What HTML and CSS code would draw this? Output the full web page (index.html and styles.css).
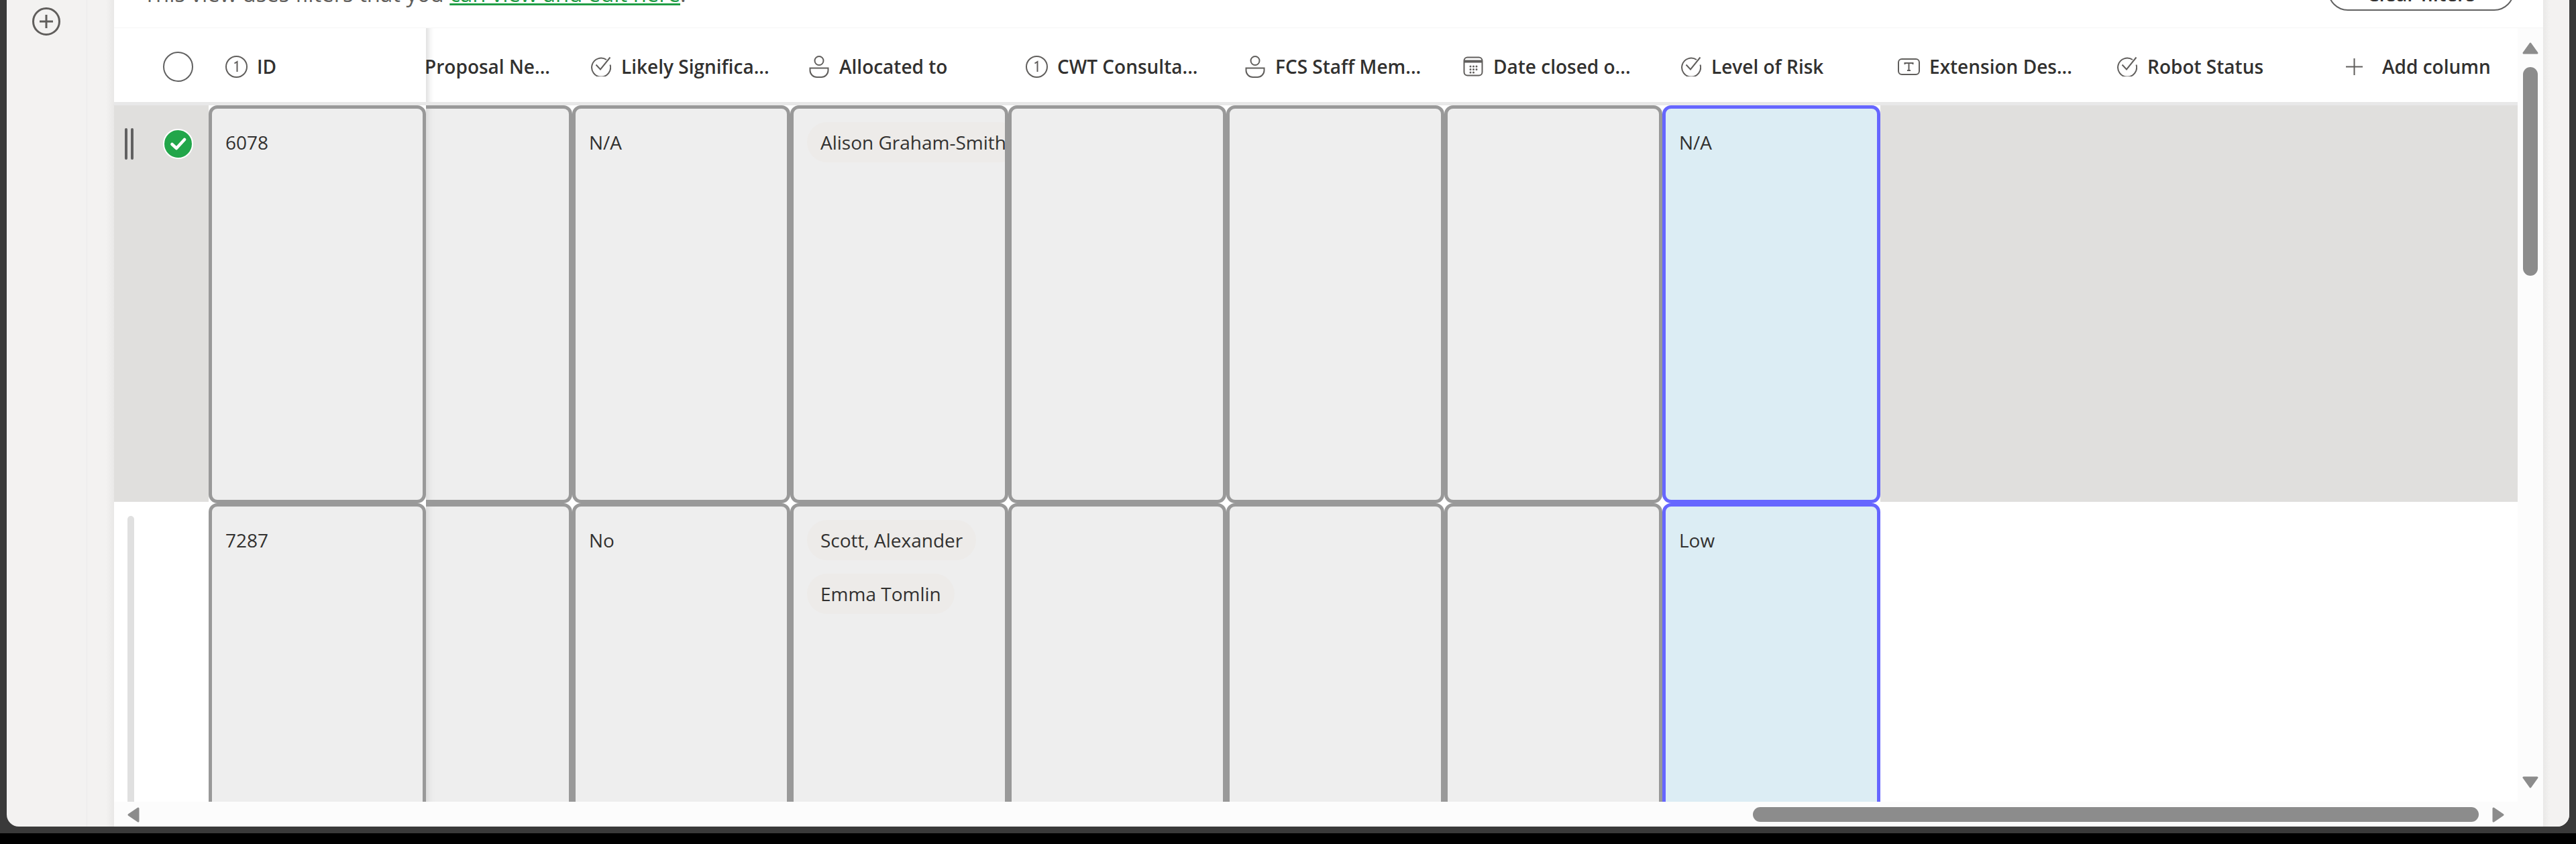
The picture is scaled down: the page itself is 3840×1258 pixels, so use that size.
FILE: index.html
```html
<!DOCTYPE html>
<html lang="en">
<head>
<meta charset="utf-8">
<title>List view</title>
<link rel="stylesheet" href="styles.css">
</head>
<body>
<div class="app">
  <div class="shell">
    <aside class="rail">
      <svg class="rail-add" viewBox="0 0 42 42"><circle cx="21" cy="21" r="19.5"/><path d="M21 11v20M11 21h20"/></svg>
    </aside>
    <div class="gutter-left"></div>
    <main class="main">
      <div class="toolbar">
        <p class="notice">This view uses filters that you <a class="notice-link">can view and edit here</a>.</p>
        <button class="clear">Clear filters</button>
      </div>
      <div class="body">
        <section class="grid">
          <div class="head">
            <div class="head-fixed">
              <div class="head-select"><span class="radio"></span></div>
              <div class="hc"><svg class="ic ic-num" viewBox="0 0 33 33"><circle cx="16.5" cy="16.5" r="15.5"/><path d="M13.5 11.5l4-2.5v15"/></svg><span class="hl">ID</span></div>
            </div>
            <div class="head-cut"><span class="hl">Proposal Ne...</span></div>
            <div class="hc col"><svg class="ic ic-chk" viewBox="0 0 30 30"><path d="M23 5A14 14 0 1 0 28.500 12.500"/><path d="M7.500 12.500L14 19.500 28.500 1.500"/></svg><span class="hl">Likely Significa...</span></div>
            <div class="hc col"><svg class="ic ic-per" viewBox="0 0 30 33"><circle cx="15" cy="7.500" r="6.500"/><path d="M1.500 18.500h27v3.500a10 10 0 0 1-10 10h-7a10 10 0 0 1-10-10z"/></svg><span class="hl">Allocated to</span></div>
            <div class="hc col tight"><svg class="ic ic-num" viewBox="0 0 33 33"><circle cx="16.5" cy="16.5" r="15.5"/><path d="M13.5 11.5l4-2.500v15"/></svg><span class="hl">CWT Consulta...</span></div>
            <div class="hc col"><svg class="ic ic-per" viewBox="0 0 30 33"><circle cx="15" cy="7.500" r="6.500"/><path d="M1.500 18.500h27v3.500a10 10 0 0 1-10 10h-7a10 10 0 0 1-10-10z"/></svg><span class="hl">FCS Staff Mem...</span></div>
            <div class="hc col"><svg class="ic ic-cal" viewBox="0 0 30 30"><rect x="1.500" y="1.500" width="27" height="27" rx="5"/><path class="bar" d="M2 7.500h26"/><path class="dots" d="M11 15h.01M15.500 15h.01M20 15h.01M11 19.500h.01M15.500 19.500h.01M20 19.500h.01M11 24h.01M15.500 24h.01"/></svg><span class="hl">Date closed o...</span></div>
            <div class="hc col"><svg class="ic ic-chk" viewBox="0 0 30 30"><path d="M23 5A14 14 0 1 0 28.500 12.500"/><path d="M7.500 12.500L14 19.500 28.500 1.500"/></svg><span class="hl">Level of Risk</span></div>
            <div class="hc col tight"><svg class="ic ic-txt" viewBox="0 0 33 25"><rect x="1" y="1" width="31" height="23" rx="5"/><path d="M10.500 9V7h12v2M16.500 7v11M14 18h5"/></svg><span class="hl">Extension Des...</span></div>
            <div class="hc col"><svg class="ic ic-chk" viewBox="0 0 30 30"><path d="M23 5A14 14 0 1 0 28.500 12.500"/><path d="M7.500 12.500L14 19.500 28.500 1.500"/></svg><span class="hl">Robot Status</span></div>
            <div class="hc add"><svg class="ic-plus" viewBox="0 0 25 25"><path d="M12.500 0v25M0 12.500h25"/></svg><span class="hl">Add column</span></div>
          </div>
          <div class="rows">
            <div class="row row-on">
              <div class="lead lead-on">
                <span class="grip"><i></i><i></i></span>
                <svg class="tick" viewBox="0 0 45 45"><circle cx="22.500" cy="22.500" r="21.500"/><path d="M13.500 23l6.500 6 12-13"/></svg>
              </div>
              <div class="cell id"><div class="box">6078</div></div>
              <div class="cell cut"><div class="box"></div></div>
              <div class="cell"><div class="box">N/A</div></div>
              <div class="cell"><div class="box chips"><span class="chip">Alison Graham-Smith</span></div></div>
              <div class="cell"><div class="box"></div></div>
              <div class="cell"><div class="box"></div></div>
              <div class="cell"><div class="box"></div></div>
              <div class="cell hot"><div class="box">N/A</div></div>
              <div class="fill"></div>
            </div>
            <div class="row">
              <div class="lead"><span class="grip-off"></span></div>
              <div class="cell id"><div class="box">7287</div></div>
              <div class="cell cut"><div class="box"></div></div>
              <div class="cell"><div class="box">No</div></div>
              <div class="cell"><div class="box chips"><span class="chip">Scott, Alexander</span><span class="chip">Emma Tomlin</span></div></div>
              <div class="cell"><div class="box"></div></div>
              <div class="cell"><div class="box"></div></div>
              <div class="cell"><div class="box"></div></div>
              <div class="cell hot"><div class="box">Low</div></div>
              <div class="fill"></div>
            </div>
          </div>
        </section>
        <div class="vbar">
          <svg class="arrow-v" viewBox="0 0 24 18"><path d="M12 2L2 16h20z"/></svg>
          <span class="vthumb"></span>
          <svg class="arrow-v down" viewBox="0 0 24 18"><path d="M2 2h20L12 16z"/></svg>
        </div>
      </div>
      <div class="hbar">
        <svg class="arrow-h" viewBox="0 0 18 23"><path d="M16 2v19L2 11.500z"/></svg>
        <span class="hthumb"></span>
        <svg class="arrow-h" viewBox="0 0 18 23"><path d="M2 2v19l14-9.500z"/></svg>
      </div>
    </main>
    <div class="gutter-right"></div>
  </div>
</div>
</body>
</html>
```
FILE: styles.css
```css
* { box-sizing: border-box; }
html, body { margin: 0; height: 1258px; overflow: hidden; background: #000; }
body { font-family: "Open Sans", "Noto Sans", sans-serif; font-size: 28px; color: #323130; }

.app { height: 1242px; padding: 0 10px 10px; background: #3a3a3a; }
.shell { display: flex; height: 1232px; background: #f3f2f1; border-radius: 0 0 18px 18px; overflow: hidden; }

.rail { width: 120px; flex: none; border-right: 1px solid #ebeaea; padding: 11px 0 0 38px; }
.rail-add { display: block; width: 42px; height: 42px; fill: none; stroke: #605e5c; stroke-width: 3; }
.gutter-left { width: 40px; flex: none; background: linear-gradient(to right, #f3f2f1 70%, #e9e8e7); }
.gutter-right { flex: 1; background: linear-gradient(to right, #e9e8e7, #f3f2f1 25%); }

.main { width: 3621px; flex: none; display: flex; flex-direction: column; background: #fcfcfc; }

.toolbar { height: 42px; flex: none; display: flex; justify-content: space-between; align-items: flex-end; padding: 0 43px 26px 44px; overflow: hidden; background: #fff; }
.notice { margin: 0 0 5px; line-height: 40px; color: #605e5c; white-space: nowrap; font-size: 32.8px; }
.notice-link { color: #1f9d45; text-decoration: underline; text-decoration-thickness: 3px; text-underline-offset: 2px; }
.clear { flex: none; width: 278px; height: 60px; padding: 8px 0 0; border: 2px solid #616161; border-radius: 30px; background: #fff; font: 600 29px "Open Sans", sans-serif; color: #323130; }

.body { flex: 1; min-height: 0; display: flex; border-top: 1px solid #f6f6f6; margin-top: -1px; }
.grid { width: 3583px; flex: none; display: flex; flex-direction: column; background: #fff; overflow: hidden; }

.head { height: 115px; flex: none; display: flex; align-items: stretch; border-bottom: 5px solid #e8e8e8; }
.head > * { padding-top: 4px; }
.head-fixed { width: 465px; flex: none; display: flex; align-items: center; }
.head-select { width: 166px; flex: none; display: flex; justify-content: flex-end; padding-right: 48px; }
.radio { width: 45px; height: 45px; border-radius: 50%; border: 2px solid #616161; }
.head-cut { width: 218px; flex: none; display: flex; align-items: center; justify-content: flex-end; padding-right: 33px; overflow: hidden; white-space: nowrap; box-shadow: inset 12px 0 8px -8px #ddd; }
.hc { display: flex; align-items: center; gap: 15px; white-space: nowrap; }
.col { width: 325px; flex: none; padding-left: 28px; }
.col.tight { padding-left: 26px; }
.add { padding-left: 44px; gap: 29px; flex: 1; }
.hl { font-weight: 600; font-size: 28px; color: #323130; }

.ic { flex: none; fill: none; stroke: #605e5c; stroke-width: 2; }
.ic-num { width: 33px; height: 33px; margin-right: -1px; }
.ic-chk { width: 30px; height: 30px; }
.ic-per { width: 30px; height: 33px; }
.ic-cal { width: 30px; height: 30px; }
.ic-cal .bar { stroke-width: 4; }
.ic-cal .dots { stroke-width: 3; stroke-linecap: round; }
.ic-txt { width: 33px; height: 25px; margin-right: -1px; }
.ic-plus { width: 25px; height: 25px; fill: none; stroke: #605e5c; stroke-width: 2; flex: none; }

.rows { flex: 1; min-height: 0; overflow: hidden; }
.row { height: 593px; display: flex; background: #fff; }

.lead { width: 141px; flex: none; display: flex; align-items: flex-start; padding-left: 16px; }
.lead-on { background: #e0dfdd; margin-bottom: 2px; }
.fill { flex: 1; margin-bottom: 2px; }
.row-on .fill { background: #e0dfdd; }
.grip { display: flex; justify-content: space-between; width: 13px; height: 47px; margin-top: 34px; }
.grip i { display: block; width: 4px; border-radius: 2px; background: #616161; }
.tick { width: 45px; height: 45px; margin: 35px 0 0 44px; }
.tick circle { fill: #22a64a; stroke: #fff; stroke-width: 2; }
.tick path { fill: none; stroke: #fff; stroke-width: 4.500; stroke-linecap: round; stroke-linejoin: round; }
.grip-off { width: 10px; height: 500px; margin: 19px 0 0 4px; border-radius: 5px; background: #e0e0e0; }

.cell { width: 325px; flex: none; background: #fff; }
.cell.id { width: 324px; }
.cell.cut { width: 218px; }
.box { height: 100%; border: 5px solid #999; border-radius: 13px; background: #eee; padding: 20px; line-height: 60px; overflow: hidden; white-space: nowrap; }
.cut .box { border-left: 0; border-radius: 0 13px 13px 0; box-shadow: inset 14px 0 10px -10px #d9d9d9; }
.hot .box { border-color: #6666ff; background: #dcedf4; }
.chips { display: flex; flex-direction: column; align-items: flex-start; gap: 20px; }
.chip { flex: none; height: 60px; padding: 0 20px; border-radius: 30px; background: #edebe9; }

.vbar { flex: 1; display: flex; flex-direction: column; align-items: center; padding: 21px 0 20px; background: #fcfcfc; }
.arrow-v { width: 24px; height: 18px; flex: none; fill: #8c8c8c; stroke: #8c8c8c; stroke-width: 3; stroke-linejoin: round; }
.vthumb { width: 22px; height: 311px; margin-top: 19px; border-radius: 11px; background: #8c8c8c; flex: none; }
.down { margin-top: auto; }

.hbar { height: 37px; flex: none; display: flex; align-items: flex-start; padding: 8px 0 0 20px; background: #fcfcfc; }
.arrow-h { width: 18px; height: 23px; flex: none; fill: #8c8c8c; stroke: #8c8c8c; stroke-width: 3; stroke-linejoin: round; }
.hthumb { width: 1082px; height: 22px; margin: 0 20px 0 2405px; border-radius: 11px; background: #8c8c8c; flex: none; }
```
